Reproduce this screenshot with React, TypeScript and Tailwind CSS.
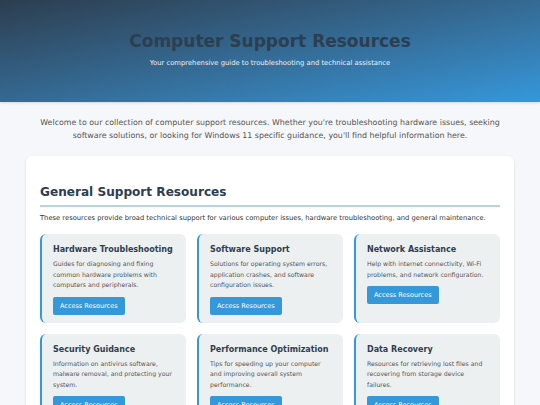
import React from "react";

const resources = [
  {
    title: "Hardware Troubleshooting",
    desc: "Guides for diagnosing and fixing common hardware problems with computers and peripherals.",
  },
  {
    title: "Software Support",
    desc: "Solutions for operating system errors, application crashes, and software configuration issues.",
  },
  {
    title: "Network Assistance",
    desc: "Help with internet connectivity, Wi-Fi problems, and network configuration.",
  },
  {
    title: "Security Guidance",
    desc: "Information on antivirus software, malware removal, and protecting your system.",
  },
  {
    title: "Performance Optimization",
    desc: "Tips for speeding up your computer and improving overall system performance.",
  },
  {
    title: "Data Recovery",
    desc: "Resources for retrieving lost files and recovering from storage device failures.",
  },
];

export default function App() {
  return (
    <div className="min-h-screen bg-[#f5f7fa] font-['DejaVu_Sans',sans-serif] text-[#333]">
      <header className="h-[102px] bg-linear-to-br from-[#2c3e50] to-[#3498db] flex flex-col items-center pt-[30px] shadow-sm">
        <h1 className="text-[17px] leading-[22px] font-bold text-[#2c3e50]">Computer Support Resources</h1>
        <p className="mt-[6px] text-[6.8px] leading-[10px] text-white/90">
          Your comprehensive guide to troubleshooting and technical assistance
        </p>
      </header>

      <p className="mx-auto mt-[14px] max-w-[470px] text-center text-[7.9px] leading-[13px] text-[#555]">
        Welcome to our collection of computer support resources. Whether you're troubleshooting hardware issues, seeking
        software solutions, or looking for Windows 11 specific guidance, you'll find helpful information here.
      </p>

      <main className="mx-[26px] mt-[14px] rounded-md bg-white px-[14px] pt-[26px] pb-4 shadow-sm">
        <h2 className="text-[12.1px] leading-[20px] font-bold text-[#2c3e50]">General Support Resources</h2>
        <div className="mt-[3px] h-[2px] bg-[#b4d4ee]" />
        <p className="mt-[6px] text-[6.75px] leading-[10px] text-[#333]">
          These resources provide broad technical support for various computer issues, hardware troubleshooting, and
          general maintenance.
        </p>

        <div className="mt-[11px] grid grid-cols-3 gap-[11px]">
          {resources.map((r) => (
            <div key={r.title} className="rounded-md border-l-2 border-[#3498db] bg-[#ecf0f1] px-[11px] pt-[10px] pb-[8px]">
              <h3 className="text-[8px] leading-[12px] font-bold text-[#2c3e50]">{r.title}</h3>
              <p className="mt-[3px] text-[6.2px] leading-[10.5px] text-[#555]">{r.desc}</p>
              <button className="mt-[6px] rounded-[2px] bg-[#3498db] px-[7px] py-[4px] text-[6.5px] leading-[10px] text-white">
                Access Resources
              </button>
            </div>
          ))}
        </div>
      </main>
    </div>
  );
}
